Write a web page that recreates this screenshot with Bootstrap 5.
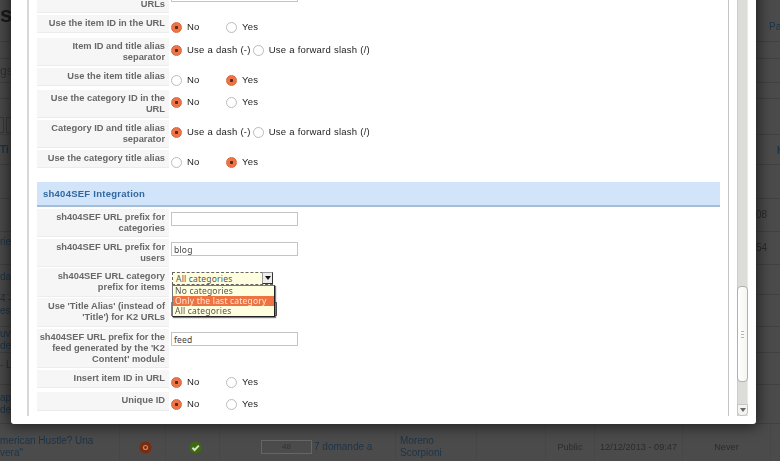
<!DOCTYPE html>
<html lang="en">
<head>
<meta charset="utf-8">
<title>K2 settings</title>
<link href="https://cdn.jsdelivr.net/npm/bootstrap@5.3.0/dist/css/bootstrap.min.css" rel="stylesheet">
<style>
html,body{height:461px;overflow:hidden;background:#4b4b4b}
body{font-family:"Liberation Sans",Arial,sans-serif;color:#2a2a2a}
.stage{height:461px;width:780px;overflow:hidden;filter:blur(.5px)}
.pg-row{border-bottom:1px solid #414141;font-size:10px;line-height:12px;display:flex;justify-content:space-between;align-items:center;white-space:nowrap}
.right-cut{width:24px;flex:none}
.fl{color:#1c3448}.fg{color:#2b2b2b}
.big{font-size:22px;font-weight:700;color:#1b1b1b;padding-bottom:12px}
.gs{font-size:12px;color:#333}
.b{font-weight:700}
.pad-pa{padding-left:13px;padding-top:12px}.pad-h{padding-left:21px;padding-top:3px}
.up6{padding-bottom:6px}.up8{padding-bottom:8px}.up12{padding-bottom:12px}
.mini-boxes{display:flex;gap:2px;padding-top:16px}
.mini-boxes i{width:4px;height:16px;border:1px solid #3a3a3a;border-left:0;display:block}
.mini-boxes i+i{width:7px;border-left:1px solid #3a3a3a;border-right:0}
.pg-last{height:37px;display:flex;font-size:10px;line-height:12px}
.pcell{flex:none;height:37px;display:flex;align-items:center;padding-top:9px;border-right:1px solid #474747;white-space:nowrap}
.c1{width:120px}.c2{width:46px;padding-left:19px}.c3{width:54px;padding-left:23px}.c4{width:176px;padding-left:41px}.c5{width:81px;padding-left:4px}.c6{width:69px}.c7{width:49px;justify-content:center}.c8{width:88px;justify-content:center}.c9{width:88px;justify-content:center}
.grey9{font-size:9.2px;color:#2b2b2b}
.count{width:51px;height:14px;border:1px solid #666;margin-right:2px;text-align:center;font-size:8px;line-height:12px;color:#333;flex:none}

.dlg{left:11px;top:-20px;width:745px;height:444px;background:#fff;border-radius:0 0 3px 3px;box-shadow:0 0 14px 3px rgba(0,0,0,.55);overflow:hidden}
.scroller{padding:0 8px 8px 16px;height:100%;gap:8px}
.fset{width:702px;flex:none;border-left:2px solid #d8d8d8;border-right:1px solid #c4c4c4;padding:0 8px;justify-content:flex-end;overflow:hidden;height:100%}
.cfg{display:flex;align-items:flex-start;flex:none}
.lbl{width:132px;flex:none;background:#f6f6f6;border-bottom:1px solid #ececec;text-align:right;font-size:9.3px;line-height:11px;font-weight:700;color:#686868;padding:3px 4px 0 2px}
.val{margin-left:2px;padding-top:6px;font-size:9.5px;line-height:12px;color:#1c1c1c;display:flex;align-items:center;letter-spacing:.25px;position:relative}
.s22{height:22px}.s23{height:23px}.s24{height:24px}.s29{height:29px}.s30{height:30px}.s31{height:31px}.s32{height:32px}.s41{height:41px}
.h18{height:18px}.h19{height:19px}.h28{height:28px}.h29{height:29px}.h39{height:39px}
.rad{appearance:none;-webkit-appearance:none;width:11px;height:11px;border-radius:50%;border:1px solid #bbb;background:#fff;margin:0 5px 0 0;flex:none;display:block}
.rad:checked{border-color:#d9663a;background:radial-gradient(circle,#5a2a18 0 1.3px,#ec7448 2px)}
.opt{display:flex;align-items:center;width:55px;margin:0}
.opt.wide{width:auto;margin-right:2px}
.opt+.opt{width:auto}
.txt{width:127px;height:14px;border:1px solid #c4c4c4;font:8.5px/12px "Noto Sans",sans-serif;color:#444;padding:0 2px;margin:-3px 0 0 0;letter-spacing:.2px;border-radius:0;display:block;background:#fff}
.sec{height:25px;flex:none;background:#d1e4fa;border-bottom:2px solid #a4bdd8;color:#30689f;font-size:9.5px;font-weight:700;line-height:23px;padding-left:6px;width:683px;margin-bottom:2px;letter-spacing:.25px}
.sbar{width:11px;flex:none;background:#dcdcd9;height:100%;justify-content:flex-end;border-left:1px solid #ccc;border-right:1px solid #e8e8e8}
.thumb{height:96px;background:linear-gradient(90deg,#fff,#f4f4f2);border:1px solid #b0b0b0;border-radius:4px;margin:0 -1px 22px;display:flex;align-items:center;justify-content:center}
.grip{width:3px;height:7px;background:repeating-linear-gradient(#b5b5b5 0 1px,transparent 1px 3px)}
.sarrow{height:12px;background:#f3f3f1;border:1px solid #c4c4c4;border-radius:0 0 4px 4px;display:flex;align-items:center;justify-content:center;margin:0 -1px}
.sarrow i{border:3px solid transparent;border-top:4px solid #666;border-bottom:0;display:block}
.sel{height:13px;width:101px;background:#ffffdf;border:1px dashed #666;font:8.5px/12px "Noto Sans",sans-serif;color:#555;padding-left:3px;margin:-2px 0 0 1px;display:flex;justify-content:space-between;letter-spacing:.2px}
.arrowbox{width:11px;height:12px;background:#eee;border:1px solid #999;border-right-color:#333;border-bottom-color:#333;display:flex;align-items:center;justify-content:center;margin:-1px -1px 0 0}
.arrowbox i{border:3px solid transparent;border-top:4px solid #111;border-bottom:0;display:block}
.sel2{height:14px;width:106px;background:#e8e8e8;border:1px solid #888;border-right-color:#555;margin:-2px 0 0 0}
.drop{left:1px;top:17px;width:103px;background:#ffffdf;border:1px solid #222;border-left-color:#777;border-top-color:#777;box-shadow:1px 1px 1px rgba(0,0,0,.5);font:8.5px/10px "Noto Sans",sans-serif;color:#555;z-index:2;letter-spacing:.2px}
.drop div{height:10px;padding-left:2px}
.drop .on{background:#ee7343;color:#ffe7d8}
</style>
</head>
<body>
<div class="stage position-relative">
  <div class="d-flex flex-column">
    <div class="pg-row" style="height:42px"><span class="big">s</span><span class="fl right-cut pad-pa">Pa</span></div>
    <div class="pg-row" style="height:17px"></div>
    <div class="pg-row" style="height:24px"><span class="gs">gs</span></div>
    <div class="pg-row" style="height:16px"></div>
    <div class="pg-row" style="height:36px"><span class="mini-boxes"><i></i><i></i></span></div>
    <div class="pg-row" style="height:30px"><span class="fl b">Ti</span><span class="fl b right-cut pad-h">H</span></div>
    <div class="pg-row" style="height:34px"></div>
    <div class="pg-row" style="height:33px"><span></span><span class="fg right-cut">08</span></div>
    <div class="pg-row" style="height:33px"><span class="fl up12">rie</span><span class="fg right-cut">54</span></div>
    <div class="pg-row" style="height:30px"><span class="fl up6">da</span></div>
    <div class="pg-row" style="height:32px"><span class="fl up12">4 -<br>es</span></div>
    <div class="pg-row" style="height:26px"><span class="fl">uvi<br>de</span></div>
    <div class="pg-row" style="height:32px"><span class="fl up8">- L</span></div>
    <div class="pg-row" style="height:39px"><span class="fl">ap<br>del</span></div>
    <div class="pg-last">
      <span class="pcell c1 fl">merican Hustle? Una<br>vera"</span>
      <span class="pcell c2"><svg width="13" height="13" viewBox="0 0 13 13"><circle cx="6.5" cy="6.5" r="6" fill="#7c2c0c"/><circle cx="6.5" cy="6.5" r="2.6" fill="#c08a72"/><circle cx="6.5" cy="6.5" r="1.4" fill="#7c2c0c"/></svg></span>
      <span class="pcell c3"><svg width="13" height="13" viewBox="0 0 13 13"><circle cx="6.5" cy="6.5" r="6" fill="#3d6a10"/><path d="M3.4 6.8 5.6 9 9.8 4.6" fill="none" stroke="#d4e0c4" stroke-width="2"/></svg></span>
      <span class="pcell c4 fl"><span class="count">48</span>7 domande a</span>
      <span class="pcell c5 fl">Moreno<br>Scorpioni</span>
      <span class="pcell c6"></span>
      <span class="pcell c7 grey9">Public</span>
      <span class="pcell c8 grey9">12/12/2013 - 09:47</span>
      <span class="pcell c9 grey9">Never</span>
    </div>
  </div>

  <div class="dlg position-absolute">
    <div class="scroller d-flex">
      <div class="fset d-flex flex-column">
        <div class="cfg s30"><div class="lbl h28"><br>URLs</div><div class="val"><input class="txt" type="text" aria-label="URLs"></div></div>
        <div class="cfg s23"><div class="lbl h18">Use the item ID in the URL</div><div class="val"><label class="opt"><input class="rad" type="radio" name="a" checked>No</label><label class="opt"><input class="rad" type="radio" name="a">Yes</label></div></div>
        <div class="cfg s30"><div class="lbl h28">Item ID and title alias separator</div><div class="val"><label class="opt wide"><input class="rad" type="radio" name="b" checked>Use a dash (-)</label><label class="opt"><input class="rad" type="radio" name="b">Use a forward slash (/)</label></div></div>
        <div class="cfg s22"><div class="lbl h18">Use the item title alias</div><div class="val"><label class="opt"><input class="rad" type="radio" name="c">No</label><label class="opt"><input class="rad" type="radio" name="c" checked>Yes</label></div></div>
        <div class="cfg s30"><div class="lbl h28">Use the category ID in the URL</div><div class="val"><label class="opt"><input class="rad" type="radio" name="d" checked>No</label><label class="opt"><input class="rad" type="radio" name="d">Yes</label></div></div>
        <div class="cfg s30"><div class="lbl h28">Category ID and title alias separator</div><div class="val"><label class="opt wide"><input class="rad" type="radio" name="e" checked>Use a dash (-)</label><label class="opt"><input class="rad" type="radio" name="e">Use a forward slash (/)</label></div></div>
        <div class="cfg s32"><div class="lbl h18">Use the category title alias</div><div class="val"><label class="opt"><input class="rad" type="radio" name="f">No</label><label class="opt"><input class="rad" type="radio" name="f" checked>Yes</label></div></div>
        <div class="sec">sh404SEF Integration</div>
        <div class="cfg s30"><div class="lbl h28">sh404SEF URL prefix for categories</div><div class="val"><input class="txt" type="text" aria-label="categories prefix"></div></div>
        <div class="cfg s29"><div class="lbl h28">sh404SEF URL prefix for users</div><div class="val"><input class="txt" type="text" value="blog" aria-label="users prefix"></div></div>
        <div class="cfg s30"><div class="lbl h29">sh404SEF URL category prefix for items</div><div class="val"><div class="sel"><span>All categories</span><span class="arrowbox"><i></i></span></div>
          <div class="drop position-absolute"><div>No categories</div><div class="on">Only the last category</div><div>All categories</div></div></div></div>
        <div class="cfg s31"><div class="lbl h29">Use 'Title Alias' (instead of 'Title') for K2 URLs</div><div class="val"><div class="sel2"></div></div></div>
        <div class="cfg s41"><div class="lbl h39">sh404SEF URL prefix for the feed generated by the 'K2 Content' module</div><div class="val"><input class="txt" type="text" value="feed" aria-label="feed prefix"></div></div>
        <div class="cfg s22"><div class="lbl h18">Insert item ID in URL</div><div class="val"><label class="opt"><input class="rad" type="radio" name="g" checked>No</label><label class="opt"><input class="rad" type="radio" name="g">Yes</label></div></div>
        <div class="cfg s24"><div class="lbl h19">Unique ID</div><div class="val"><label class="opt"><input class="rad" type="radio" name="h" checked>No</label><label class="opt"><input class="rad" type="radio" name="h">Yes</label></div></div>
      </div>
      <div class="sbar d-flex flex-column">
        <div class="thumb"><span class="grip"></span></div>
        <div class="sarrow"><i></i></div>
      </div>
    </div>
  </div>
</div>
<script src="https://cdn.jsdelivr.net/npm/bootstrap@5.3.0/dist/js/bootstrap.bundle.min.js"></script>
</body>
</html>
